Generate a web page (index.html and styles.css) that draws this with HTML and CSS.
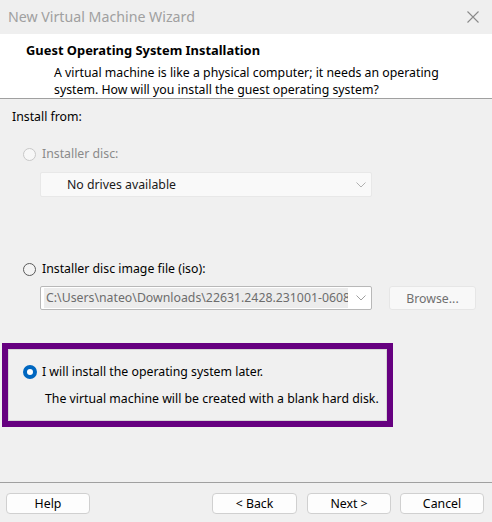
FILE: index.html
```html
<!DOCTYPE html>
<html>
<head>
<meta charset="utf-8">
<link rel="stylesheet" href="styles.css">
</head>
<body>
<div class="window">
  <div class="titlebar">
    <span class="title">New Virtual Machine Wizard</span>
    <svg class="close" width="12" height="12" viewBox="0 0 12 12"><path d="M0.5 0.5 L11.5 11.5 M11.5 0.5 L0.5 11.5" stroke="#8a8a8a" stroke-width="1.1" fill="none"/></svg>
  </div>
  <div class="header">
    <div class="heading">Guest Operating System Installation</div>
    <div class="desc">A virtual machine is like a physical computer; it needs an operating<br>system. How will you install the guest operating system?</div>
  </div>
  <div class="content">
    <div class="label">Install from:</div>
    <div class="option first">
      <span class="radio disabled"></span><span class="opt-text muted">Installer disc:</span>
    </div>
    <div class="combo disabled-combo">
      <span class="combo-text">No drives available</span>
      <svg class="chev" width="10" height="6" viewBox="0 0 10 6"><path d="M0.5 0.5 L5 5 L9.5 0.5" stroke="#b0b0b0" stroke-width="1" fill="none"/></svg>
    </div>
    <div class="option second">
      <span class="radio"></span><span class="opt-text">Installer disc image file (iso):</span>
    </div>
    <div class="iso-row">
      <div class="combo iso-combo">
        <span class="iso-text">C:\Users\nateo\Downloads\22631.2428.231001-0608</span>
        <svg class="chev" width="10" height="6" viewBox="0 0 10 6"><path d="M0.5 0.5 L5 5 L9.5 0.5" stroke="#a0a0a0" stroke-width="1" fill="none"/></svg>
      </div>
      <div class="browse">Browse...</div>
    </div>
    <div class="highlight">
      <div class="inner">
        <div class="option later">
          <span class="radio checked"></span><span class="opt-text">I will install the operating system later.</span>
        </div>
        <div class="note">The virtual machine will be created with a blank hard disk.</div>
      </div>
    </div>
  </div>
  <div class="footer">
    <div class="btn help">Help</div>
    <div class="btn back">&lt; Back</div>
    <div class="btn next">Next &gt;</div>
    <div class="btn cancel">Cancel</div>
  </div>
</div>
</body>
</html>
```
FILE: styles.css
```css
html, body {
  margin: 0;
  padding: 0;
  background: #f0f0f0;
}
.window {
  width: 492px;
  height: 522px;
  display: flex;
  flex-direction: column;
  font-family: "Noto Sans", "Open Sans", sans-serif;
  font-size: 12.3px;
  color: #000;
  background: #f0f0f0;
  overflow: hidden;
}
.titlebar {
  height: 34px;
  flex: none;
  display: flex;
  align-items: center;
  padding: 0 13px 0 8px;
  background: #efefef;
}
.title {
  flex: 1;
  font-size: 14.2px;
  color: #a0a0a0;
  line-height: 20px;
}
.close {
  display: block;
}
.header {
  flex: none;
  height: 65px;
  box-sizing: border-box;
  background: #ffffff;
  border-bottom: 1px solid #a0a0a0;
  padding: 8px 0 0 26px;
}
.heading {
  font-weight: bold;
  font-size: 12.9px;
  line-height: 17px;
}
.desc {
  margin: 5px 0 0 28px;
  line-height: 17px;
}
.content {
  flex: 1;
  display: flex;
  flex-direction: column;
  padding: 10px 0 0 12px;
}
.label {
  line-height: 16px;
}
.option {
  display: flex;
  align-items: center;
  height: 16px;
  line-height: 16px;
}
.option.first {
  margin: 21px 0 0 11px;
}
.option.second {
  margin: 64px 0 0 11px;
}
.radio {
  width: 13px;
  height: 13px;
  box-sizing: border-box;
  border-radius: 50%;
  border: 1px solid #5a5a5a;
  background: #f3f3f3;
  margin-right: 6px;
  flex: none;
}
.radio.disabled {
  border-color: #c8c8c8;
  background: #f7f7f7;
}
.radio.checked {
  width: 14px;
  height: 14px;
  border: 4px solid #0067c0;
  background: #ffffff;
  margin-right: 5px;
}
.opt-text.muted {
  color: #8a8a8a;
}
.combo {
  display: flex;
  align-items: center;
  box-sizing: border-box;
  width: 332px;
  margin-left: 28px;
}
.disabled-combo {
  height: 25px;
  margin-top: 10px;
  background: #f9f9f9;
  border: 1px solid #e8e8e8;
  border-radius: 2px;
  padding: 0 4px 0 26px;
}
.combo-text {
  flex: 1;
  color: #1a1a1a;
}
.chev {
  display: block;
  margin-right: 1px;
}
.iso-row {
  display: flex;
  align-items: center;
  margin-top: 9px;
}
.iso-combo {
  height: 24px;
  background: #ffffff;
  border: 1px solid #b8b8b8;
  border-radius: 2px;
  padding: 0 4px 0 3px;
}
.iso-text {
  flex: 1;
  color: #6d6d6d;
  background: #ececec;
  white-space: nowrap;
  overflow: hidden;
  line-height: 20px;
  padding-left: 2px;
  margin-right: 8px;
}
.browse {
  width: 87px;
  height: 24px;
  box-sizing: border-box;
  margin-left: 17px;
  background: #f8f8f8;
  border: 1px solid #e6e6e6;
  border-radius: 3px;
  color: #707070;
  display: flex;
  align-items: center;
  justify-content: center;
}
.highlight {
  margin: 33px 0 0 -10px;
  width: 391px;
  height: 84px;
  box-sizing: border-box;
  border: 6px solid #660080;
}
.inner {
  height: 100%;
  box-sizing: border-box;
  border: 1px solid #d6d6d6;
  padding: 14px 0 0 14px;
}
.option.later {
  margin: 0;
}
.note {
  margin: 11px 0 0 22px;
  line-height: 16px;
}
.footer {
  flex: none;
  height: 40px;
  box-sizing: border-box;
  border-top: 1px solid #a0a0a0;
  display: flex;
  align-items: flex-start;
  padding: 10px 0 0 6px;
}
.btn {
  width: 84px;
  height: 21px;
  box-sizing: border-box;
  background: #fdfdfd;
  border: 1px solid #d0d0d0;
  border-radius: 4px;
  display: flex;
  align-items: center;
  justify-content: center;
  line-height: 16px;
}
.btn.back {
  margin-left: 122px;
  width: 85px;
}
.btn.next {
  margin-left: 10px;
}
.btn.cancel {
  margin-left: 9px;
}
```
